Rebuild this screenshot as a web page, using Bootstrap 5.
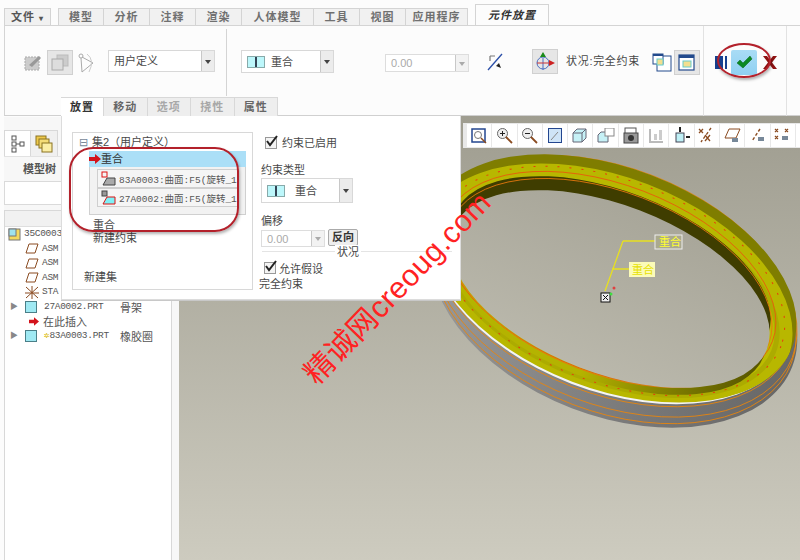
<!DOCTYPE html>
<html lang="zh-CN">
<head>
  <meta charset="UTF-8" />
  <title>元件放置</title>
  <link href="https://cdn.jsdelivr.net/npm/bootstrap@5.3.3/dist/css/bootstrap.min.css" rel="stylesheet"/>
  <style>
    html, body { margin: 0; width: 800px; height: 560px; overflow: hidden; }
    body { background: #fcfcfc; color: #484848; font: 11px/14px "Liberation Sans", "Noto Sans CJK SC", sans-serif; position: relative; }

    .tabbar { height: 25px; padding-left: 4px; }
    .rtab { height: 17px; margin-top: 8px; background: #f1f1f1; border: 1px solid #d4d4d4; border-width: 1px 1px 0 0; text-align: center; font-weight: 700; color: #707070; line-height: 16px; letter-spacing: 1px; width: 46px; }
    .rtab-file { width: 47px; border-left: 1px solid #d4d4d4; margin-right: 7px; color: #555; }
    .rtab-first { border-left: 1px solid #d4d4d4; }
    .rtab-wide { width: 62px; }
    .rtab-humanmodel { width: 72px; }
    .rtab-on { height: 21px; margin-top: 4px; margin-left: 7px; width: 74px; background: #fcfcfc; border: 1px solid #d4d4d4; border-bottom: 0; font-style: italic; color: #333; line-height: 20px; }
    .caret-mini { font-size: 8px; }

    .ribbon { height: 91px; margin-left: 4px; border-top: 1px solid #d4d4d4; border-left: 1px solid #d4d4d4; border-bottom: 1px solid #d0d0d0; padding-top: 24px; }
    .rgroup1 { width: 222px; height: 67px; border-right: 1px solid #d4d4d4; margin-top: -21px; padding: 21px 0 0 15px; gap: 1px; }
    .rgroup2 { width: 476px; padding-left: 14px; }
    .rgroup3 { width: 84px; height: 90px; margin-top: -24px; padding: 24px 0 0 7px; border-left: 1px solid #e2e2e2; border-right: 1px solid #e2e2e2; }
    .ibtn { width: 26px; height: 25px; display: flex; align-items: center; justify-content: center; flex: none; }
    .ibtn-on { background: #e6e6e6; border: 1px solid #d0d0d0; }
    .ibtn-ok { background: linear-gradient(#a9dcf5, #8fd0f2); border-radius: 2px; }
    .combo { display: flex; height: 22px; border: 1px solid #d8d8d8; background: #fff; font-size: 11px; align-items: center; }
    .combo-text { flex: 1; display: flex; align-items: center; gap: 6px; padding-left: 5px; }
    .combo-arrow { width: 13px; height: 100%; background: #ececec; border-left: 1px solid #c8c8c8; display: flex; align-items: center; justify-content: center; }
    .combo-arrow::after { content: ""; border: 3px solid transparent; border-top: 4px solid #444; margin-top: 4px; }
    .combo-off { color: #aaa; border-color: #ddd; height: 18px; }
    .combo-off .combo-arrow { background: #f2f2f2; }
    .combo-off .combo-arrow::after { border-top-color: #aaa; }
    .coin { width: 18px; height: 12px; background: #bdf7fb; border: 1px solid #8aa; position: relative; flex: none; }
    .coin::after { content: ""; position: absolute; left: 7px; top: 0; bottom: 0; width: 2px; background: #345; }

    .pcount { position: absolute; left: 61px; top: 97px; height: 19px; z-index: 3; }
    .ptab { width: 43.5px; height: 19px; text-align: center; background: #eeeeee; border: 1px solid #d8d8d8; border-bottom: 0; border-left: 0; font-weight: 700; color: #666; line-height: 18px; letter-spacing: 1px; }
    .ptab-on { background: #fff; color: #333; width: 43px; }
    .ptab-dim { color: #a8a8a8; }
    .place-panel { position: absolute; left: 61px; top: 116px; width: 400px; height: 184px; background: #fff; border: 1px solid #dcdcdc; border-top: 0; box-shadow: 0 1px 0 #c8c8c8; z-index: 3; }
    .setbox { position: absolute; left: 10px; top: 16px; width: 181px; height: 158px; border: 1px solid #d8d8d8; }
    .rowtxt { position: absolute; white-space: nowrap; }
    .ref-sel { position: absolute; left: 7px; width: 142px; height: 19px; border: 1px solid #cfcfcf; background: #f5f5f5; display: flex; align-items: center; gap: 3px; padding-left: 3px; white-space: nowrap; font: 9.500px "Liberation Mono", "Noto Sans CJK SC", monospace; color: #555; }
    .sel-band { position: absolute; left: 16px; top: 18px; width: 157px; height: 16px; background: #abdff7; color: #333; line-height: 16px; padding-left: 12px; }
    .sel-body { position: absolute; left: 16px; top: 34px; width: 157px; height: 48px; background: #f2f2f2; border: 1px solid #d0d0d0; border-top: 0; }
    .ref-sel-a { top: 2px; }
    .ref-sel-b { top: 21px; }
    .cbx { width: 12px; height: 12px; border: 1px solid #999; background: #f4f4f4; display: inline-block; position: absolute; }
    .rev-btn { position: absolute; left: 266px; top: 113px; width: 30px; height: 17px; border: 1px solid #aaa; border-radius: 2px; background: #eee; text-align: center; font-weight: 700; color: #333; line-height: 15px; }
    .stat-line { position: absolute; left: 200px; top: 135px; width: 190px; height: 1px; background: #e4e4e4; }

    .lside { position: absolute; left: 4px; top: 117px; width: 175px; height: 443px; background: #f7f7f7; }
    .tree-tabs { height: 39px; padding: 13px 0 0 0; }
    .ttab { width: 27px; height: 26px; border: 1px solid #d8d8d8; border-bottom: 0; display: flex; align-items: center; justify-content: center; background: #fff; }
    .ttab-off { background: #f0f0f0; border-left: 0; }
    .tree-title { height: 25px; font-weight: 700; color: #555; line-height: 25px; padding-left: 19px; border-top: 1px solid #e2e2e2; width: 57px; }
    .search-box { height: 24px; background: #fff; border: 1px solid #dadada; width: 172px; }
    .tree { margin-top: 5px; width: 168px; height: 353px; background: #fff; border: 1px solid #d8d8d8; position: relative; overflow: hidden; }
    .tree-head { height: 16px; background: #f1f1f1; border-bottom: 1px solid #dedede; }
    .tree-row { height: 14.5px; display: flex; align-items: center; gap: 3px; white-space: nowrap; font: 9.500px/14px "Liberation Mono", "Noto Sans CJK SC", monospace; letter-spacing: -.3px; color: #555; }
    .tree-lv1 { padding-left: 20px; }
    .tree-lv0 { padding-left: 3px; }
    .tree-note { position: absolute; left: 115px; font: 11px "Liberation Sans", "Noto Sans CJK SC", sans-serif; letter-spacing: 0; }
    .tree-arrow { width: 12px; margin-left: 5px; color: #888; font-size: 8px; flex: none; }
    .tree-cn { font: 11px "Liberation Sans", "Noto Sans CJK SC", sans-serif; letter-spacing: 0; margin-left: 1px; }
    .star-mark { color: #d8b800; }

    .scene { position: absolute; left: 179px; top: 116px; width: 621px; height: 444px; overflow: hidden; }
    .tool3d { position: absolute; left: 463px; top: 123px; width: 337px; height: 25px; background: #e8e8e8; display: flex; gap: 1px; padding: 1px 0 0 4px; z-index: 2; overflow: hidden; }
    .tbtn { width: 24.3px; height: 23px; background: #fff; flex: none; display: flex; align-items: center; justify-content: center; }
    .halo { position: absolute; border: 2px solid #b3212b; box-shadow: 1px 2px 3px rgba(0,0,0,.3); z-index: 5; }
    .halo-list { left: 69px; top: 147px; width: 170px; height: 85px; border-radius: 24px; }
    .halo-ok { left: 717px; top: 43px; width: 54px; height: 35px; border-radius: 50%; }
    .wmark { position: absolute; left: 271px; top: 271px; color: #f22; font-size: 30px; line-height: 34px; white-space: nowrap; transform: rotate(-46deg); font-family: "Liberation Sans", "Noto Sans CJK SC", sans-serif; z-index: 6; letter-spacing: .5px; }
  </style>
</head>
<body>
  <div class="tabbar d-flex">
    <div class="rtab rtab-file">文件 <span class="caret-mini">▾</span></div>
    <div class="rtab rtab-first">模型</div>
    <div class="rtab">分析</div>
    <div class="rtab">注释</div>
    <div class="rtab">渲染</div>
    <div class="rtab rtab-humanmodel">人体模型</div>
    <div class="rtab">工具</div>
    <div class="rtab">视图</div>
    <div class="rtab rtab-wide">应用程序</div>
    <div class="rtab rtab-on">元件放置</div>
  </div>

  <div class="ribbon d-flex">
    <div class="rgroup1 d-flex">
      <div class="ibtn">
        <svg width="18" height="18" viewBox="0 0 18 18"><rect x="1" y="3" width="14" height="13" fill="#ccc" stroke="#aaa" stroke-dasharray="2 1"/><path d="M5 11 L15 2 L17 4 L8 13 Z" fill="#999"/></svg>
      </div>
      <div class="ibtn ibtn-on">
        <svg width="18" height="18" viewBox="0 0 18 18"><rect x="6" y="1" width="11" height="11" fill="#ccc" stroke="#bbb"/><rect x="1" y="5" width="11" height="11" fill="#ddd" stroke="#aaa"/></svg>
      </div>
      <div class="ibtn">
        <svg width="20" height="22" viewBox="0 0 20 22" fill="none" stroke="#aaa"><circle cx="4" cy="4" r="2"/><path d="M4 6 L5 20 L16 11 L5 5"/><path d="M10 2 Q18 8 12 20" stroke="#ccc"/></svg>
      </div>
      <div class="combo" style="width:107px;margin-left:7px">
        <div class="combo-text">用户定义</div><div class="combo-arrow"></div>
      </div>
    </div>
    <div class="rgroup2 d-flex align-items-start">
      <div class="combo" style="width:93px;height:23px">
        <div class="combo-text"><span class="coin"></span>重合</div><div class="combo-arrow"></div>
      </div>
      <div class="combo combo-off" style="width:84px;margin:4px 0 0 51px">
        <div class="combo-text">0.00</div><div class="combo-arrow"></div>
      </div>
      <div class="ibtn" style="margin:-1px 0 0 13px">
        <svg width="16" height="18" viewBox="0 0 16 18"><path d="M1 17 L15 1" stroke="#2b4fa8" stroke-width="1.3"/><path d="M3 3 L8 3 M3 3 L3 8" stroke="#777" stroke-width="1.2"/><path d="M14 15 L9 13 L12 10 Z" fill="#222"/></svg>
      </div>
      <div class="ibtn ibtn-on" style="margin:-1px 0 0 24px;height:25px">
        <svg width="24" height="23" viewBox="0 0 24 23" fill="none"><circle cx="10" cy="13" r="6" stroke="#4a6fc0"/><path d="M10 8 V20" stroke="#4a6fc0"/><path d="M4 13 H16" stroke="#c33"/><path d="M10 2 L7 7 H13 Z" fill="#1a8a1a"/><path d="M22 13 L16 10 V16 Z" fill="#c22"/></svg>
      </div>
      <div style="margin:4px 0 0 8px;width:84px;white-space:nowrap;letter-spacing:.7px">状况:完全约束</div>
      <div class="ibtn" style="width:24px">
        <svg width="20" height="20" viewBox="0 0 20 20" fill="none"><rect x="5" y="3" width="14" height="15" stroke="#234a8c" fill="#fff"/><rect x="1" y="1" width="10" height="10" stroke="#234a8c" fill="#fff"/><rect x="1" y="1" width="10" height="2" fill="#234a8c"/><rect x="5" y="6" width="6" height="6" fill="#f3df8f" stroke="#6cc"/></svg>
      </div>
      <div class="ibtn ibtn-on">
        <svg width="18" height="18" viewBox="0 0 18 18" fill="none"><rect x="1" y="1" width="15" height="15" stroke="#234a8c" stroke-width="1.2" fill="#fff"/><rect x="1" y="1" width="15" height="3" fill="#234a8c"/><rect x="5" y="7" width="8" height="6" fill="#f3df8f" stroke="#6cc"/></svg>
      </div>
    </div>
    <div class="rgroup3 d-flex">
      <div class="ibtn" style="width:20px">
        <svg width="12" height="13" viewBox="0 0 12 13"><rect x="0" y="0" width="8" height="13" fill="#16408f"/><rect x="10" y="0" width="2" height="13" fill="#16408f"/></svg>
      </div>
      <div class="ibtn ibtn-ok">
        <svg width="17" height="13" viewBox="0 0 17 13"><path d="M1 7 L4 4 L7 7 L14 0 L16 3 L7 12 Z" fill="#0b8a23" stroke="#06601a" stroke-width=".5"/></svg>
      </div>
      <div class="ibtn" style="width:20px;margin-left:3px">
        <svg width="16" height="15" viewBox="0 0 16 15"><path d="M1 1 H5 L8 5 L11 1 H15 L10 7.500 L15 14 H11 L8 10 L5 14 H1 L6 7.500 Z" fill="#8e1212"/></svg>
      </div>
    </div>
  </div>

  <!-- model tree column -->
  <div class="lside">
    <div class="tree-tabs d-flex">
      <div class="ttab">
        <svg width="14" height="18" viewBox="0 0 14 18" fill="#fff" stroke="#555"><rect x="1" y="1" width="4" height="4"/><rect x="1" y="7" width="4" height="4"/><rect x="1" y="13" width="4" height="4"/><rect x="9" y="7" width="4" height="4"/><path d="M5 9 H9" fill="none"/></svg>
      </div>
      <div class="ttab ttab-off">
        <svg width="18" height="18" viewBox="0 0 18 18"><rect x="1" y="1" width="10" height="9" fill="#eec94a" stroke="#8a7320"/><rect x="4" y="4" width="10" height="9" fill="#f4dc77" stroke="#8a7320"/><rect x="7" y="8" width="10" height="9" fill="#fbeea5" stroke="#8a7320"/></svg>
      </div>
    </div>
    <div class="tree-title">模型树</div>
    <div class="search-box"></div>
    <div class="tree">
      <div class="tree-head"></div>
      <div class="tree-row tree-lv0">
        <svg width="13" height="13" viewBox="0 0 13 13"><rect x="1" y="1" width="11" height="11" fill="#f3d95e" stroke="#777"/><rect x="1" y="1" width="7" height="7" fill="#9fe3ee" stroke="#777"/></svg>35C0003
      </div>
      <div class="tree-row tree-lv1"><svg width="14" height="11" viewBox="0 0 14 11" fill="none" stroke="#8a4b20"><path d="M4 1 H13 L10 10 H1 Z"/></svg>ASM</div>
      <div class="tree-row tree-lv1"><svg width="14" height="11" viewBox="0 0 14 11" fill="none" stroke="#8a4b20"><path d="M4 1 H13 L10 10 H1 Z"/></svg>ASM</div>
      <div class="tree-row tree-lv1"><svg width="14" height="11" viewBox="0 0 14 11" fill="none" stroke="#8a4b20"><path d="M4 1 H13 L10 10 H1 Z"/></svg>ASM</div>
      <div class="tree-row tree-lv1"><svg width="14" height="13" viewBox="0 0 14 13" stroke="#8a4b20"><path d="M1 1 L13 12 M13 1 L1 12 M7 0 V13 M0 7 H14"/></svg>STA</div>
      <div class="tree-row"><span class="tree-arrow">▶</span><svg width="12" height="12" viewBox="0 0 12 12"><rect x=".5" y=".5" width="11" height="11" fill="#9fe9f3" stroke="#4b7f88"/></svg><span class="ms-1">27A0002.PRT</span><span class="tree-note">骨架</span></div>
      <div class="tree-row"><svg width="10" height="9" viewBox="0 0 12 10" style="margin-left:24px"><path d="M0 3 H6 V0 L12 5 L6 10 V7 H0 Z" fill="#d3131b"/></svg><span class="tree-cn">在此插入</span></div>
      <div class="tree-row"><span class="tree-arrow">▶</span><svg width="12" height="12" viewBox="0 0 12 12"><rect x=".5" y=".5" width="11" height="11" fill="#9fe9f3" stroke="#4b7f88"/></svg><span class="ms-1"><span class="star-mark">✲</span>83A0003.PRT</span><span class="tree-note">橡胶圈</span></div>
    </div>
  </div>

  <!-- 3d viewport -->
  <div class="scene">
    <svg width="621" height="444" viewBox="179 116 621 444">
      <defs>
        <linearGradient id="bgGrad" gradientUnits="userSpaceOnUse" x1="0" y1="116" x2="0" y2="560">
          <stop offset="0" stop-color="#9f9d90"/><stop offset="1" stop-color="#cdcbbf"/>
        </linearGradient>
        <linearGradient id="grayGrad" gradientUnits="userSpaceOnUse" x1="430" y1="0" x2="800" y2="0">
          <stop offset="0" stop-color="#9a9a9a"/><stop offset=".6" stop-color="#7c7c7c"/><stop offset="1" stop-color="#686868"/>
        </linearGradient>
        <linearGradient id="wallGrad" gradientUnits="userSpaceOnUse" x1="610" y1="0" x2="770" y2="0">
          <stop offset="0" stop-color="#b4b300"/><stop offset=".5" stop-color="#858300"/><stop offset="1" stop-color="#5a5800"/>
        </linearGradient>
        <clipPath id="yellowClip"><ellipse cx="612" cy="278" rx="193" ry="111" transform="rotate(21 612 278)"/></clipPath>
      </defs>
      <rect x="179" y="116" width="621" height="444" fill="url(#bgGrad)"/>

      <!-- rubber ring, layered ellipses -->
      <ellipse cx="614" cy="298" rx="191" ry="118" transform="rotate(21 614 298)" fill="url(#grayGrad)"/>
      <ellipse cx="614" cy="295" rx="190" ry="117" transform="rotate(21 614 295)" fill="none" stroke="#e8850c" stroke-width=".8"/>
      <ellipse cx="614" cy="289" rx="191" ry="116" transform="rotate(21 614 289)" fill="none" stroke="#e8850c" stroke-width=".8"/>
      <ellipse cx="612" cy="281" rx="191" ry="113" transform="rotate(21 612 281)" fill="none" stroke="#e8850c" stroke-width=".8"/>
      <ellipse cx="611" cy="280" rx="191" ry="111" transform="rotate(21 611 280)" fill="#f4f4f4"/>
      <ellipse cx="612" cy="278" rx="193" ry="110" transform="rotate(21 612 278)" fill="#7f7d00"/>
      <g clip-path="url(#yellowClip)">
        <ellipse cx="608" cy="288" rx="193" ry="111" transform="rotate(21 608 288)" fill="#b8b700"/>
        <ellipse cx="610" cy="288" rx="178" ry="96" transform="rotate(21 610 288)" fill="#acab00"/>
        <ellipse cx="610" cy="288" rx="173" ry="90" transform="rotate(21 610 288)" fill="#bcbb00"/>
        <ellipse cx="607" cy="296" rx="168" ry="84" transform="rotate(21 607 296)" fill="url(#wallGrad)"/>
        <ellipse cx="611" cy="275" rx="168" ry="84" transform="rotate(21 611 275)" fill="#3f3d00"/>
        <ellipse cx="610" cy="279" rx="174" ry="94" transform="rotate(21 610 279)" fill="none" stroke="#e8590c" stroke-width=".8"/>
        <ellipse cx="610" cy="283" rx="170" ry="91" transform="rotate(21 610 283)" fill="none" stroke="#e8790c" stroke-width=".8"/>
        <ellipse cx="611" cy="281" rx="182" ry="101" transform="rotate(21 611 281)" fill="none" stroke="#e83a0c" stroke-dasharray="2 10"/>
      </g>
      <ellipse cx="610" cy="289" rx="168" ry="84" transform="rotate(21 610 289)" fill="url(#bgGrad)"/>

      <path d="M623 241 H657 M612 269 H630 M623 241 L605 291" fill="none" stroke="#e8e020" stroke-width="1.300"/>
      <rect x="655" y="235" width="27" height="14" fill="#aaa98f" stroke="#eee"/>
      <text x="659" y="246" fill="#ffff30" font-size="11">重合</text>
      <rect x="629" y="262" width="26" height="15" fill="#fbfbb8"/>
      <text x="632" y="274" fill="#e6e000" font-size="11">重合</text>
      <rect x="601" y="293" width="9" height="9" fill="#eee" stroke="#111"/>
      <path d="M603 295 L608 300 M608 295 L603 300" stroke="#111"/>
      <circle cx="611" cy="294" r="1.500" fill="#3fe040"/>
      <circle cx="614" cy="288" r="1.500" fill="#e04040"/>
    </svg>
  </div>

  <div class="tool3d">
    <div class="tbtn"><svg width="16" height="16" viewBox="0 0 16 16" fill="none"><rect x="1" y="1" width="13" height="13" stroke="#23468f" stroke-width="1.500"/><circle cx="7" cy="7" r="3.500" stroke="#777"/><path d="M10 10 L15 15" stroke="#8a4b20" stroke-width="1.500"/></svg></div>
    <div class="tbtn"><svg width="17" height="17" viewBox="0 0 17 17" fill="none"><circle cx="6.500" cy="6.500" r="5" stroke="#666" fill="#eee"/><path d="M4 6.500 H9 M6.500 4 V9" stroke="#222"/><path d="M10 10 L16 16" stroke="#8a4b20" stroke-width="1.800"/></svg></div>
    <div class="tbtn"><svg width="17" height="17" viewBox="0 0 17 17" fill="none"><circle cx="6.500" cy="6.500" r="5" stroke="#666" fill="#eee"/><path d="M4 6.500 H9" stroke="#222"/><path d="M10 10 L16 16" stroke="#8a4b20" stroke-width="1.800"/></svg></div>
    <div class="tbtn"><svg width="14" height="15" viewBox="0 0 14 15"><rect x=".5" y=".5" width="13" height="14" fill="#cfe4f7" stroke="#23468f"/><path d="M3 12 L10 4" stroke="#888"/></svg></div>
    <div class="tbtn"><svg width="16" height="15" viewBox="0 0 16 15"><path d="M1 5 L5 1 H14 V10 L10 14 H1 Z" fill="#c6f1f6" stroke="#667"/><path d="M1 5 H10 V14 M10 5 L14 1" fill="none" stroke="#667"/></svg></div>
    <div class="tbtn"><svg width="18" height="16" viewBox="0 0 18 16"><path d="M1 7 L4 4 H11 V14 H1 Z" fill="#c6f1f6" stroke="#667"/><rect x="8" y="0" width="9" height="8" fill="#fff" stroke="#888"/></svg></div>
    <div class="tbtn"><svg width="16" height="17" viewBox="0 0 16 17"><rect x="2" y="1" width="11" height="7" fill="#fff" stroke="#555"/><rect x="1" y="6" width="14" height="10" fill="#999" stroke="#444"/><circle cx="8" cy="11" r="3" fill="#333"/></svg></div>
    <div class="tbtn"><svg width="15" height="15" viewBox="0 0 15 15"><path d="M1 1 V14 H14" fill="none" stroke="#bbb" stroke-width="2"/><rect x="5" y="6" width="3" height="6" fill="#ccc"/><rect x="10" y="2" width="3" height="10" fill="#ccc"/></svg></div>
    <div class="tbtn"><svg width="17" height="17" viewBox="0 0 17 17"><rect x="3" y="6" width="8" height="9" fill="#bff0f6" stroke="#445"/><path d="M7 0 V5 M13 10 H17" stroke="#222" stroke-width="2"/></svg></div>
    <div class="tbtn"><svg width="17" height="17" viewBox="0 0 17 17" stroke="#8a4b20" stroke-width="1.300"><path d="M1 2 L5 6 M5 2 L1 6 M7 8 L12 14 M12 8 L7 14"/><path d="M13 1 L3 15" stroke-dasharray="3 2"/></svg></div>
    <div class="tbtn"><svg width="17" height="15" viewBox="0 0 17 15" fill="none"><path d="M5 1 H16 L12 10 H1 Z" stroke="#8a4b20"/><rect x="8" y="10" width="6" height="4" fill="#789"/></svg></div>
    <div class="tbtn"><svg width="17" height="15" viewBox="0 0 17 15" fill="none"><path d="M11 1 L3 13" stroke="#8a4b20" stroke-dasharray="3 2" stroke-width="1.400"/><rect x="9" y="9" width="6" height="4" fill="#789"/></svg></div>
    <div class="tbtn"><svg width="17" height="15" viewBox="0 0 17 15" stroke="#8a4b20" stroke-width="1.200"><path d="M1 1 L4 4 M4 1 L1 4 M11 1 L14 4 M14 1 L11 4 M1 8 L4 11 M4 8 L1 11"/><rect x="8" y="8" width="6" height="4" fill="#789" stroke="none"/></svg></div>
    <div class="tbtn"><svg width="17" height="15" viewBox="0 0 17 15" stroke="#8a4b20" stroke-width="1.200"><path d="M1 1 H8 M1 8 H8 M4 1 V14"/></svg></div>
  </div>

  <!-- dashboard tabs + placement panel -->
  <div class="pcount d-flex">
    <div class="ptab ptab-on">放置</div>
    <div class="ptab">移动</div>
    <div class="ptab ptab-dim">选项</div>
    <div class="ptab ptab-dim">挠性</div>
    <div class="ptab">属性</div>
  </div>
  <div class="place-panel">
    <div class="setbox">
      <div class="rowtxt" style="left:6px;top:2px"><span class="me-1" style="color:#789">⊟</span>集2（用户定义）</div>
      <div class="sel-band">重合
        <svg width="12" height="10" viewBox="0 0 12 10" style="position:absolute;left:0;top:3px"><path d="M0 3 H6 V0 L12 5 L6 10 V7 H0 Z" fill="#d3131b"/></svg>
      </div>
      <div class="sel-body">
        <div class="ref-sel ref-sel-a"><svg width="15" height="15" viewBox="0 0 15 15" class="flex-shrink-0"><rect x="1" y="1" width="5" height="5" fill="none" stroke="#d11"/><path d="M2 14 L6 7 H14 V14 Z" fill="#aaa" stroke="#444"/></svg>83A0003:曲面:F5(旋转_1</div>
        <div class="ref-sel ref-sel-b"><svg width="15" height="15" viewBox="0 0 15 15" class="flex-shrink-0"><rect x="1" y="1" width="5" height="5" fill="#999" stroke="#444"/><path d="M2 14 L6 7 H14 V14 Z" fill="#7ff0f6" stroke="#d11"/></svg>27A0002:曲面:F5(旋转_1</div>
      </div>
      <div class="rowtxt" style="left:20px;top:85px">重合</div>
      <div class="rowtxt" style="left:20px;top:98px">新建约束</div>
      <div class="rowtxt" style="left:11px;top:137px">新建集</div>
    </div>

    <span class="cbx" style="left:203px;top:21px"></span>
    <svg width="14" height="13" viewBox="0 0 14 13" class="rowtxt" style="left:203px;top:19px"><path d="M2 6 L5 10 L12 1" fill="none" stroke="#222" stroke-width="2"/></svg>
    <div class="rowtxt" style="left:220px;top:20px">约束已启用</div>
    <div class="rowtxt" style="left:199px;top:47px">约束类型</div>
    <div class="combo rowtxt" style="left:199px;top:62px;width:92px;height:25px">
      <div class="combo-text"><span class="coin"></span><span class="ms-1">重合</span></div><div class="combo-arrow"></div>
    </div>
    <div class="rowtxt" style="left:199px;top:98px">偏移</div>
    <div class="combo combo-off rowtxt" style="left:199px;top:114px;width:64px;height:17px">
      <div class="combo-text">0.00</div><div class="combo-arrow"></div>
    </div>
    <div class="rev-btn">反向</div>
    <div class="stat-line"></div>
    <div class="rowtxt" style="left:273px;top:129px;background:#fff;padding:0 2px">状况</div>
    <span class="cbx" style="left:202px;top:146px"></span>
    <svg width="14" height="13" viewBox="0 0 14 13" class="rowtxt" style="left:202px;top:144px"><path d="M2 6 L5 10 L12 1" fill="none" stroke="#222" stroke-width="2"/></svg>
    <div class="rowtxt" style="left:217px;top:146px">允许假设</div>
    <div class="rowtxt" style="left:197px;top:161px">完全约束</div>
  </div>

  <div class="halo halo-list"></div>
  <div class="halo halo-ok"></div>
  <div class="wmark">精诚网creoug.com</div>
</body>
</html>
